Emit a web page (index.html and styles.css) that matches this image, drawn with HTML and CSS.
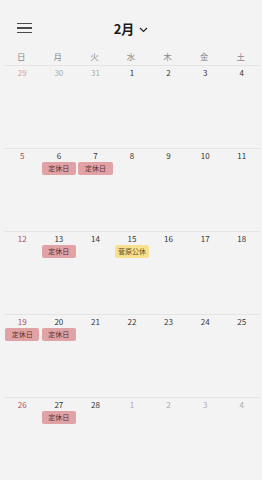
FILE: index.html
```html
<!DOCTYPE html>
<html lang="ja">
<head>
<meta charset="utf-8">
<link rel="stylesheet" href="styles.css">
</head>
<body>
<div class="app">
  <header class="header">
    <div class="menu"><span></span><span></span><span></span></div>
    <div class="title">2月<svg class="chev" width="9" height="6" viewBox="0 0 9 6"><path d="M1 1 L4.5 4.5 L8 1" fill="none" stroke="#222" stroke-width="1.2"/></svg></div>
  </header>
  <div class="cal">
    <div class="week head">
      <div class="wd">日</div><div class="wd">月</div><div class="wd">火</div><div class="wd">水</div><div class="wd">木</div><div class="wd">金</div><div class="wd">土</div>
    </div>
    <div class="week">
      <div class="day"><div class="num sun other">29</div></div>
      <div class="day"><div class="num other">30</div></div>
      <div class="day"><div class="num other">31</div></div>
      <div class="day"><div class="num">1</div></div>
      <div class="day"><div class="num">2</div></div>
      <div class="day"><div class="num">3</div></div>
      <div class="day"><div class="num">4</div></div>
    </div>
    <div class="week">
      <div class="day"><div class="num sun">5</div></div>
      <div class="day"><div class="num">6</div><div class="ev off">定休日</div></div>
      <div class="day"><div class="num">7</div><div class="ev off">定休日</div></div>
      <div class="day"><div class="num">8</div></div>
      <div class="day"><div class="num">9</div></div>
      <div class="day"><div class="num">10</div></div>
      <div class="day"><div class="num">11</div></div>
    </div>
    <div class="week">
      <div class="day"><div class="num sun">12</div></div>
      <div class="day"><div class="num">13</div><div class="ev off">定休日</div></div>
      <div class="day"><div class="num">14</div></div>
      <div class="day"><div class="num">15</div><div class="ev hol">菅原公休</div></div>
      <div class="day"><div class="num">16</div></div>
      <div class="day"><div class="num">17</div></div>
      <div class="day"><div class="num">18</div></div>
    </div>
    <div class="week">
      <div class="day"><div class="num sun">19</div><div class="ev off">定休日</div></div>
      <div class="day"><div class="num">20</div><div class="ev off">定休日</div></div>
      <div class="day"><div class="num">21</div></div>
      <div class="day"><div class="num">22</div></div>
      <div class="day"><div class="num">23</div></div>
      <div class="day"><div class="num">24</div></div>
      <div class="day"><div class="num">25</div></div>
    </div>
    <div class="week">
      <div class="day"><div class="num sun">26</div></div>
      <div class="day"><div class="num">27</div><div class="ev off">定休日</div></div>
      <div class="day"><div class="num">28</div></div>
      <div class="day"><div class="num other">1</div></div>
      <div class="day"><div class="num other">2</div></div>
      <div class="day"><div class="num other">3</div></div>
      <div class="day"><div class="num other">4</div></div>
    </div>
  </div>
</div>
</body>
</html>
```
FILE: styles.css
```css
html, body {
  margin: 0;
  padding: 0;
  background: #f3f3f3;
}
body {
  font-family: "Noto Sans CJK JP", "Noto Sans", sans-serif;
  color: #333;
}
.app {
  width: 262px;
  height: 480px;
  overflow: hidden;
}
.header {
  height: 48px;
  display: flex;
  align-items: center;
  justify-content: center;
  position: relative;
}
.menu {
  position: absolute;
  left: 17px;
  top: 23px;
  width: 15px;
  display: flex;
  flex-direction: column;
  gap: 3px;
}
.menu span {
  display: block;
  height: 1.4px;
  background: #4a4a4a;
}
.title {
  display: flex;
  align-items: center;
  gap: 5px;
  font-size: 13px;
  font-weight: 700;
  color: #1a1a1a;
  margin-left: 0;
  margin-top: 10px;
  line-height: 16px;
}
.chev {
  display: block;
  margin-top: 1px;
}
.cal {
  margin: 0 2px 0 4px;
}
.week {
  display: grid;
  grid-template-columns: repeat(7, 1fr);
  height: 83px;
  border-top: 1px solid #e4e4e4;
  box-sizing: border-box;
}
.week.head {
  height: 17px;
  border-top: none;
}
.wd {
  text-align: center;
  font-size: 8.5px;
  line-height: 17px;
  color: #8a8a8a;
  padding-right: 2px;
}
.day {
  display: flex;
  flex-direction: column;
  align-items: stretch;
  padding: 1px 1.2px 0;
  min-width: 0;
}
.num {
  text-align: center;
  font-size: 8px;
  line-height: 11px;
  height: 11px;
  color: #333;
}
.num.sun {
  color: #b04a64;
}
.num.other {
  color: #aaaaaa;
}
.num.sun.other {
  color: #d9a0aa;
}
.ev {
  margin-top: 1px;
  height: 13px;
  line-height: 13px;
  border-radius: 2px;
  font-size: 7px;
  text-align: center;
  white-space: nowrap;
}
.ev.off {
  background: #e0a2a5;
  color: #5a3030;
}
.ev.hol {
  background: #f7e08e;
  color: #6a5420;
}
```
